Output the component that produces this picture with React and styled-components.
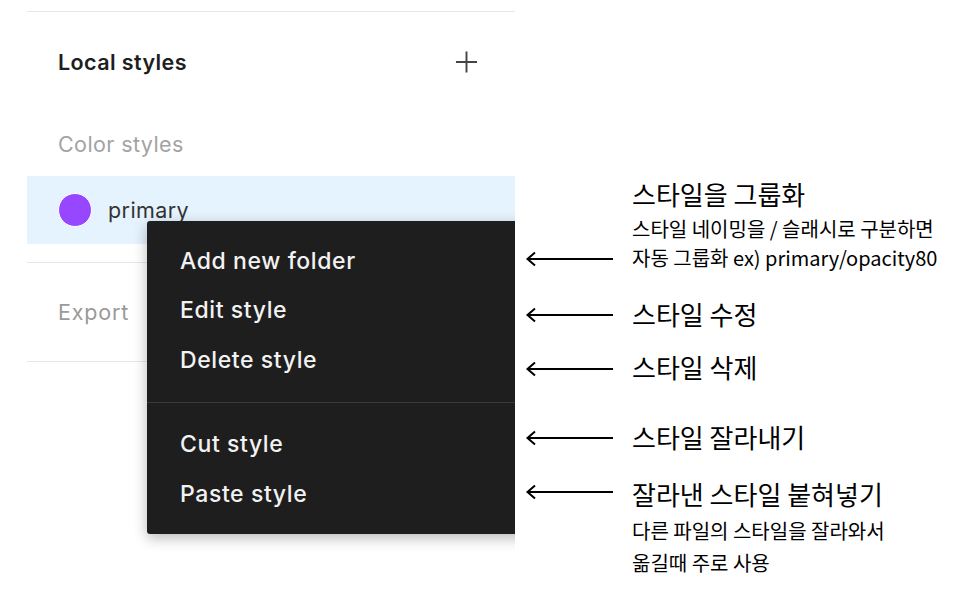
import styled, { createGlobalStyle } from 'styled-components';

const GlobalStyle = createGlobalStyle`
    html, body {
        margin: 0;
        padding: 0;
        background: #FFFFFF;
    }
    * {
        box-sizing: border-box;
    }
`;

const menuItems = [
    ['Add new folder', 'Edit style', 'Delete style'],
    ['Cut style', 'Paste style'],
];

const notes = [
    {
        title: '스타일을 그룹화',
        lines: ['스타일 네이밍을 / 슬래시로 구분하면', '자동 그룹화 ex) primary/opacity80'],
        gap: 0,
        arrowTop: 73,
        lineHeight: 29,
        subGap: 4,
    },
    { title: '스타일 수정', lines: [], gap: 26, arrowTop: 9 },
    { title: '스타일 삭제', lines: [], gap: 21, arrowTop: 10 },
    { title: '스타일 잘라내기', lines: [], gap: 38, arrowTop: 9 },
    {
        title: '잘라낸 스타일 붙혀넣기',
        lines: ['다른 파일의 스타일을 잘라와서', '옮길때 주로 사용'],
        gap: 25,
        arrowTop: 6,
        lineHeight: 32,
        subGap: 5,
    },
];

function Arrow() {
    return (
        <svg width="88" height="16" viewBox="0 0 88 16">
            <path d="M2 8 H88" stroke="#000" strokeWidth="2" fill="none" />
            <path d="M10 1.5 L2.5 8 L10 14.5" stroke="#000" strokeWidth="2" fill="none" />
        </svg>
    );
}

export default function App() {
    return (
        <Page>
            <GlobalStyle />
            <Panel>
                <Header>
                    <h2>Local styles</h2>
                    <PlusIcon viewBox="0 0 24 24">
                        <path d="M12 1 V23 M1 12 H23" stroke="#444" strokeWidth="2" />
                    </PlusIcon>
                </Header>
                <SectionLabel>Color styles</SectionLabel>
                <StyleRow>
                    <Swatch />
                    <span>primary</span>
                </StyleRow>
                <ExportRow>Export</ExportRow>

                <ContextMenu>
                    {menuItems.map((group, i) => (
                        <MenuGroup key={i} $divided={i > 0}>
                            {group.map((label) => (
                                <MenuItem key={label}>{label}</MenuItem>
                            ))}
                        </MenuGroup>
                    ))}
                </ContextMenu>
            </Panel>

            <Notes>
                {notes.map((note) => (
                    <Note key={note.title} $gap={note.gap}>
                        <ArrowSlot $top={note.arrowTop}>
                            <Arrow />
                        </ArrowSlot>
                        <NoteText>
                            <NoteTitle>{note.title}</NoteTitle>
                            {note.lines.map((line, i) => (
                                <NoteLine key={line} $lh={note.lineHeight} $mt={i === 0 ? note.subGap : 0}>
                                    {line}
                                </NoteLine>
                            ))}
                        </NoteText>
                    </Note>
                ))}
            </Notes>
        </Page>
    );
}

const Page = styled.div`
    width: 956px;
    height: 615px;
    display: flex;
    align-items: flex-start;
    gap: 10px;
    padding: 11px 0 0 27px;
    overflow: hidden;
    font-family: Inter, "Noto Sans", sans-serif;
`;

const Panel = styled.div`
    position: relative;
    width: 488px;
    height: 545px;
    flex-shrink: 0;
    border-top: 1px solid #E6E6E6;
    overflow: hidden;
    display: flex;
    flex-direction: column;
    font-size: 21.5px;
    letter-spacing: 0.4px;
`;

const Header = styled.div`
    height: 100px;
    display: flex;
    align-items: center;
    justify-content: space-between;
    padding: 0 37px 0 31px;

    h2 {
        margin: 0;
        font-size: 21.5px;
        font-weight: 600;
        color: #1E1E1E;
    }
`;

const PlusIcon = styled.svg`
    width: 23px;
    height: 24px;
`;

const SectionLabel = styled.div`
    height: 64px;
    display: flex;
    align-items: center;
    padding-left: 31px;
    color: #A3A3A3;
`;

const StyleRow = styled.div`
    height: 68px;
    display: flex;
    align-items: center;
    gap: 16px;
    padding-left: 31px;
    background: #E5F3FE;
    color: #333333;
`;

const Swatch = styled.div`
    width: 34px;
    height: 34px;
    border-radius: 50%;
    background: #9747FF;
    border: 1.5px solid #FFFFFF;
`;

const ExportRow = styled.div`
    margin-top: 18px;
    height: 100px;
    display: flex;
    align-items: center;
    padding-left: 31px;
    border-top: 1px solid #E6E6E6;
    border-bottom: 1px solid #E6E6E6;
    color: #9A9A9A;
    letter-spacing: 0.8px;
`;

const ContextMenu = styled.div`
    position: absolute;
    left: 120px;
    top: 209px;
    width: 420px;
    height: 313px;
    background: #1E1E1E;
    border-radius: 3px;
    box-shadow: 0 4px 14px rgba(0, 0, 0, 0.28);
    padding: 15px 0 14px;
`;

const MenuGroup = styled.div`
    display: flex;
    flex-direction: column;
    ${({ $divided }) => $divided && `
        margin-top: 17px;
        padding-top: 17px;
        border-top: 1.5px solid #3A3A3A;
    `}
`;

const MenuItem = styled.div`
    height: 49.5px;
    display: flex;
    align-items: center;
    padding-left: 33px;
    font-size: 23px;
    font-weight: 500;
    letter-spacing: 0.6px;
    color: #F2F2F2;
`;

const Notes = styled.div`
    margin-top: 167px;
    display: flex;
    flex-direction: column;
    font-family: "Noto Sans CJK KR", "Noto Sans", sans-serif;
    color: #000000;
`;

const Note = styled.div`
    margin-top: ${({ $gap }) => $gap}px;
    display: flex;
    align-items: flex-start;
    gap: 19px;
`;

const ArrowSlot = styled.div`
    margin-top: ${({ $top }) => $top}px;
    display: flex;
`;

const NoteText = styled.div`
    display: flex;
    flex-direction: column;
`;

const NoteTitle = styled.div`
    font-size: 26px;
    line-height: 32px;
`;

const NoteLine = styled.div`
    font-size: 20px;
    line-height: ${({ $lh }) => $lh}px;
    margin-top: ${({ $mt }) => $mt}px;
`;
